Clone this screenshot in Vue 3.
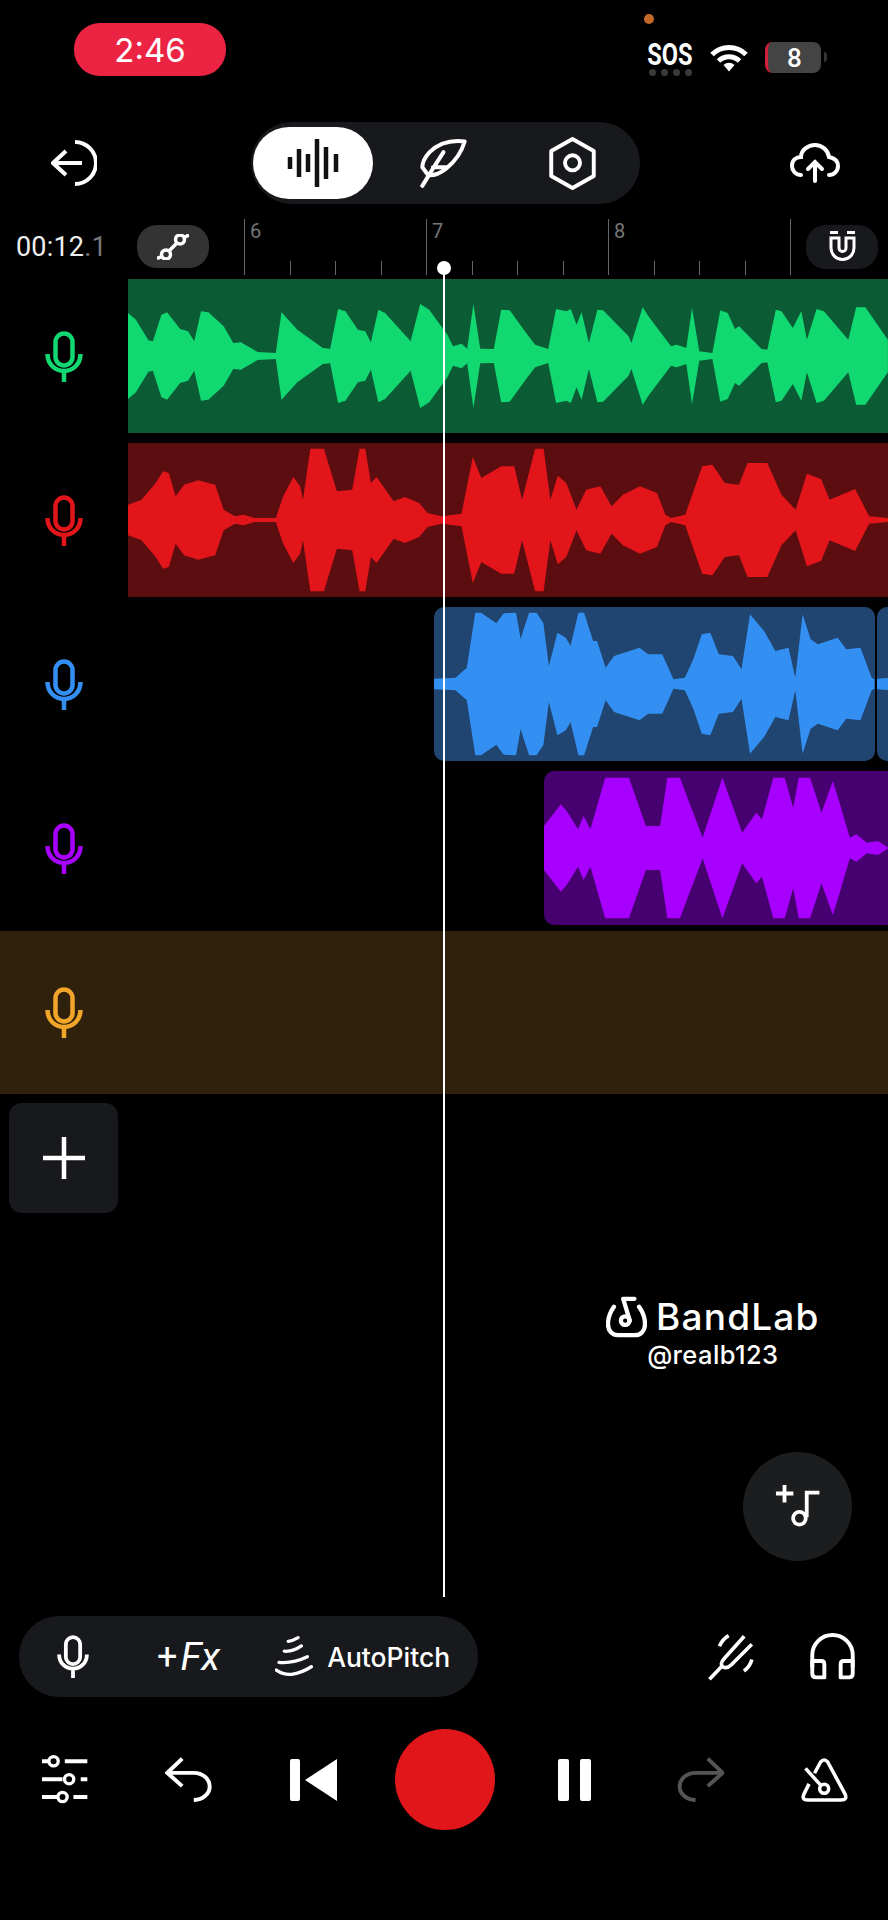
<template>
  <div class="app">
    <!-- status bar -->
    <div class="status">
      <div class="timer">2:46</div>
      <div class="status-right">
        <span class="rec-dot"></span>
        <div class="sos">
          <span class="sos-text">SOS</span>
          <div class="sos-dots"><i v-for="n in 4" :key="n"></i></div>
        </div>
        <svg class="wifi" width="38" height="28" viewBox="0 0 38 28" fill="none" stroke="#fff" stroke-width="5">
          <path d="M2 10.500 A 24 24 0 0 1 36 10.500" />
          <path d="M8.500 17 A 15 15 0 0 1 29.500 17" />
          <path d="M13.500 21 A 8 8 0 0 1 24.500 21 L19 27.500 Z" fill="#fff" stroke="none" />
        </svg>
        <div class="battery"><span>8</span></div>
        <span class="battery-nub"></span>
      </div>
    </div>

    <!-- toolbar -->
    <div class="toolbar">
      <svg width="46" height="46" viewBox="0 0 46 46" fill="none" stroke="#fff" stroke-width="4">
        <path d="M24 2 A 21 21 0 0 1 24 44" />
        <path d="M2 23 H31 M15 11 L2 23 L15 35" />
      </svg>
      <div class="modes">
        <div class="mode mode-active">
          <svg width="52" height="48" viewBox="0 0 52 48" fill="none" stroke="#111" stroke-width="4.500">
            <path d="M3 18 V30 M12 10 V38 M21 15 V33 M30 0 V48 M39 8 V40 M49 15 V33" />
          </svg>
        </div>
        <div class="mode">
          <svg width="48" height="50" viewBox="30 20 145 150" fill="none" stroke="#fff" stroke-width="12" stroke-linecap="round" stroke-linejoin="round">
            <path d="M168 30 Q104 22 62 62 Q40 86 40 108 L58 132 Q84 134 112 112 Q154 78 168 30 Z" />
            <path d="M40 164 L72 112 L104 62 M72 108 H112" />
          </svg>
        </div>
        <div class="mode">
          <svg width="47" height="53" viewBox="424 19 142 162" fill="none" stroke="#fff" stroke-width="12" stroke-linejoin="round">
            <path d="M495 25 L560 62 V138 L495 175 L430 138 V62 Z" />
            <circle cx="495" cy="98" r="23" />
          </svg>
        </div>
      </div>
      <svg class="upload" width="50" height="40" viewBox="0 0 50 40" fill="none" stroke="#fff" stroke-width="4" stroke-linecap="round">
        <path d="M11 32 C 5 32 2 27 2 23 C 2 17 6 14 11 14 C 11 7 18 2 25 2 C 32 2 38 7 39 14 C 44 15 48 18 48 23 C 48 28 44 32 39 32" />
        <path d="M25 38 V19 M18 26 L25 19 L32 26" />
      </svg>
    </div>

    <!-- ruler -->
    <div class="ruler-row">
      <div class="ruler-left">
        <div class="time">00:12<span>.1</span></div>
        <div class="curve-btn">
          <svg width="32" height="26" viewBox="0 0 32 26" fill="none" stroke="#fff" stroke-width="3.500">
            <circle cx="9" cy="20.500" r="4.500" />
            <circle cx="23" cy="5.500" r="4.500" />
            <path d="M0 24.500 L5 22.500 M12 17 L20 9 M27 3.500 L32 1" />
          </svg>
        </div>
      </div>
      <div class="ticks">
        <div v-for="t in ticks" :key="t.i" class="tick" :class="{ major: t.label }">
          <span v-if="t.label" class="tick-label">{{ t.label }}</span>
        </div>
        <div class="tick major end"></div>
      </div>
      <div class="magnet-btn">
        <svg width="29" height="31" viewBox="0 0 29 31" fill="none" stroke="#fff" stroke-width="3">
          <path d="M2 1.500 H10 M19 1.500 H27" />
          <path d="M3 7 V17 a11.500 11.500 0 0 0 23 0 V7 H18 V17 a3.500 3.500 0 0 1 -7 0 V7 Z" />
        </svg>
      </div>
    </div>

    <!-- tracks -->
    <div class="tracks">
      <div v-for="t in tracks" :key="t.name" class="track" :class="{ selected: t.selected }">
        <div class="track-head">
          <svg width="38" height="51" viewBox="0 0 38 51" fill="none" :stroke="t.color" stroke-width="4.500">
            <rect x="10.500" y="2.500" width="17" height="32" rx="8.500" />
            <path d="M2.500 23 C 2.500 33 10 40 19 40 S 35.500 33 35.500 23 M19 40 V51" />
          </svg>
        </div>
        <div class="lane">
          <div
            v-for="c in t.clips"
            :key="c.left"
            class="clip"
            :class="{ rounded: t.rounded }"
            :style="{ marginLeft: c.left + 'px', width: c.width + 'px', background: t.bg }"
          >
            <svg :width="c.width" height="154" :viewBox="`0 0 ${c.width} 154`">
              <polygon :points="c.points" :fill="t.color" />
            </svg>
          </div>
        </div>
      </div>
    </div>

    <div class="add-btn">
      <svg width="42" height="42" viewBox="0 0 42 42" stroke="#fff" stroke-width="4.500">
        <path d="M0 21 H42 M21 0 V42" />
      </svg>
    </div>

    <div class="watermark">
      <div class="brand">
        <svg width="41" height="42" viewBox="76 76 124 126" fill="none" stroke="#fff" stroke-width="13" stroke-linecap="round" stroke-linejoin="round">
          <path d="M100 108 C 88 125 82 142 82 160 C 82 182 96 194 112 194 H164 C 182 194 194 180 194 160 C 194 142 186 122 176 108" />
          <path d="M162 84 H128 L148 150" />
          <circle cx="134" cy="150" r="13" />
        </svg>
        <span class="brand-name">BandLab</span>
      </div>
      <div class="handle">@realb123</div>
    </div>

    <div class="fab">
      <svg width="46" height="46" viewBox="580 640 145 145" fill="none" stroke="#fff" stroke-width="12">
        <path d="M583 670 H638 M610 643 V698" />
        <path d="M680 745 V667 H720" />
        <circle cx="657" cy="748" r="20" />
      </svg>
    </div>

    <!-- bottom controls -->
    <div class="bottom">
      <div class="tools-row">
        <div class="tools-pill">
          <svg width="32" height="43" viewBox="0 0 38 51" fill="none" stroke="#fff" stroke-width="4.500">
            <rect x="10.500" y="2.500" width="17" height="32" rx="8.500" />
            <path d="M2.500 23 C 2.500 33 10 40 19 40 S 35.500 33 35.500 23 M19 40 V51" />
          </svg>
          <div class="fx"><span class="fx-plus">+</span><em>Fx</em></div>
          <div class="autopitch">
            <svg width="38" height="43" viewBox="50 30 115 128" fill="none" stroke="#fff" stroke-width="10" stroke-linecap="round">
              <path d="M90 48 Q105 46 120 37" />
              <path d="M78 78 Q104 80 130 62" />
              <path d="M62 112 Q104 116 148 95" />
              <path d="M54 135 Q76 150 100 148 Q130 144 160 125" />
            </svg>
            <span>AutoPitch</span>
          </div>
        </div>
        <div class="tools-right">
          <svg width="50" height="48" viewBox="50 40 150 145" fill="none" stroke="#fff" stroke-width="11" stroke-linecap="butt">
            <path d="M60 180 L96 142" />
            <path d="M165 50 L104 118 Q90 134 100 142 Q112 150 126 136 L188 74" />
            <path d="M118 48 Q100 58 90 80 M188 120 Q182 142 164 155" />
          </svg>
          <svg width="47" height="49" viewBox="358 34 144 148" fill="none" stroke="#fff" stroke-width="12" stroke-linejoin="round">
            <path d="M368 140 V104 A62 62 0 0 1 492 104 V140" />
            <path d="M368 122 H396 Q405 122 405 132 V172 H380 Q368 172 368 160 Z" />
            <path d="M492 122 H464 Q455 122 455 132 V172 H480 Q492 172 492 160 Z" />
          </svg>
        </div>
      </div>

      <div class="transport">
        <svg width="47" height="51" viewBox="30 28 142 154" fill="none" stroke="#fff" stroke-width="12">
          <path d="M33 50 H55 M102 50 H170 M33 104 H95 M150 104 H170 M33 158 H80 M128 158 H170" />
          <circle cx="68" cy="50" r="14" stroke-width="10" />
          <circle cx="115" cy="104" r="14" stroke-width="10" />
          <circle cx="95" cy="158" r="14" stroke-width="10" />
        </svg>
        <svg width="47" height="45" viewBox="403 38 142 134" fill="none" stroke="#fff" stroke-width="12">
          <path d="M455 42 L410 85 L455 125" />
          <path d="M410 85 H490 A 48 41 0 0 1 490 167" />
        </svg>
        <svg width="47" height="42" viewBox="0 0 47 42" fill="#fff">
          <rect x="0" y="0" width="10" height="42" rx="2" />
          <path d="M15 21 L47 0 V42 Z" />
        </svg>
        <div class="record"></div>
        <svg width="33" height="42" viewBox="0 0 33 42" fill="#fff">
          <rect x="0" y="0" width="11" height="42" rx="2" />
          <rect x="22" y="0" width="11" height="42" rx="2" />
        </svg>
        <svg width="47" height="45" viewBox="19 38 142 134" fill="none" stroke="#555" stroke-width="12">
          <path d="M112 42 L157 85 L112 125" />
          <path d="M157 85 H75 A 48 41 0 0 0 75 167" />
        </svg>
        <svg width="47" height="46" viewBox="391 36 146 140" fill="none" stroke="#fff" stroke-width="11" stroke-linejoin="round">
          <path d="M433 85 L452 50 Q463 38 474 50 L528 150 Q536 168 515 168 H412 Q392 168 400 150 L416 118" />
          <path d="M405 70 L452 122" />
          <circle cx="463" cy="133" r="14" />
        </svg>
      </div>
    </div>

    <!-- playhead sits over everything -->
    <div class="playhead"><span></span></div>
  </div>
</template>

<script setup>
// peaks are [x, top] read off the reference crops: x in 1.766x, y in 3x
const SX = 1.766

const greenPeaks = [
  [226, 130], [240, 150], [262, 212], [270, 215], [285, 135], [295, 128], [318, 178], [332, 185], [343, 215],
  [355, 125], [368, 128], [395, 170], [412, 220], [425, 218], [455, 247], [487, 250], [497, 128], [525, 180],
  [570, 235], [583, 237], [597, 118], [610, 125], [632, 180], [645, 185], [655, 218], [668, 120], [680, 130],
  [725, 215], [742, 103], [758, 120], [790, 195], [800, 230], [815, 222], [825, 237], [836, 103], [848, 237],
  [872, 238], [885, 120], [900, 122], [925, 180], [945, 225], [968, 238], [982, 118], [1000, 125], [1008, 118],
  [1018, 165], [1027, 128], [1040, 220], [1055, 120], [1065, 122], [1110, 200], [1115, 220], [1135, 113],
  [1145, 140], [1185, 230], [1195, 225], [1212, 235], [1222, 115], [1235, 245], [1258, 250], [1272, 122],
  [1285, 130], [1298, 178], [1305, 170], [1345, 238], [1355, 240], [1370, 120], [1380, 125], [1400, 175],
  [1415, 125], [1425, 210], [1442, 118], [1455, 125], [1498, 210], [1512, 113], [1528, 113], [1568, 210],
]

const redPeaks = [
  [226, 705], [250, 690], [275, 640], [288, 605], [298, 610], [310, 680], [325, 645], [350, 632], [380, 645],
  [395, 720], [415, 740], [430, 735], [450, 745], [487, 745], [500, 680], [518, 622], [530, 650], [535, 690],
  [548, 537], [572, 537], [595, 665], [622, 660], [635, 537], [645, 537], [655, 640], [665, 622], [695, 695],
  [715, 682], [740, 700], [755, 730], [780, 740], [815, 732], [835, 562], [850, 625], [885, 590], [908, 590],
  [922, 690], [945, 537], [960, 537], [972, 690], [985, 618], [1000, 640], [1018, 720], [1035, 660], [1060, 650],
  [1080, 710], [1100, 675], [1130, 650], [1160, 670], [1175, 735], [1185, 745], [1210, 735], [1240, 590],
  [1258, 585], [1280, 640], [1305, 645], [1320, 580], [1355, 580], [1380, 675], [1405, 720], [1425, 612],
  [1450, 628], [1465, 690], [1510, 658], [1535, 740], [1568, 745],
]

const bluePeaks = [
  [767, 238], [805, 235], [825, 205], [840, 40], [850, 40], [877, 72], [890, 42], [912, 40], [920, 118], [935, 40],
  [948, 40], [960, 70], [970, 200], [985, 100], [1000, 115], [1008, 140], [1022, 40], [1032, 40], [1048, 125],
  [1055, 125], [1070, 205], [1085, 170], [1130, 145], [1145, 165], [1170, 165], [1190, 240], [1210, 235],
  [1225, 180], [1240, 105], [1255, 100], [1270, 165], [1295, 170], [1310, 210], [1325, 45], [1350, 95],
  [1370, 155], [1393, 145], [1405, 235], [1418, 45], [1432, 120], [1445, 135], [1480, 115], [1495, 150],
  [1520, 145], [1540, 235], [1545, 240],
]

const blueTail = [[1548, 238], [1568, 236]]

const purplePeaks = [
  [960, 680], [990, 615], [1002, 640], [1020, 690], [1030, 650], [1042, 690], [1068, 535], [1110, 535], [1140, 680],
  [1165, 680], [1178, 535], [1200, 535], [1240, 715], [1275, 535], [1310, 700], [1335, 640], [1345, 660], [1365, 535],
  [1385, 535], [1400, 625], [1410, 535], [1430, 535], [1450, 640], [1470, 545], [1480, 600], [1500, 715], [1512, 705],
  [1530, 730], [1550, 725], [1568, 745],
]

const wavePoints = (peaks, center) => {
  const x0 = peaks[0][0]
  const top = peaks.map(([x, y]) => [(x - x0) / SX, 77 - (center - y) / 3])
  const bottom = top.map(([x, y]) => [x, 154 - y]).reverse()
  return [...top, ...bottom].map(([x, y]) => `${x.toFixed(1)},${y.toFixed(1)}`).join(" ")
}

const tracks = [
  {
    name: "green",
    color: "#12d871",
    bg: "#0b5c35",
    clips: [{ left: 0, width: 760, points: wavePoints(greenPeaks, 259) }],
  },
  {
    name: "red",
    color: "#e1151a",
    bg: "#5c0d10",
    clips: [{ left: 0, width: 760, points: wavePoints(redPeaks, 751) }],
  },
  {
    name: "blue",
    color: "#3390f2",
    bg: "#1f4570",
    rounded: true,
    clips: [
      { left: 306, width: 441, points: wavePoints(bluePeaks, 254) },
      { left: 2, width: 30, points: wavePoints(blueTail, 254) },
    ],
  },
  {
    name: "purple",
    color: "#a700ff",
    bg: "#47006f",
    rounded: true,
    clips: [{ left: 416, width: 360, points: wavePoints(purplePeaks, 746) }],
  },
  {
    name: "yellow",
    color: "#f2a52b",
    bg: "transparent",
    selected: true,
    clips: [],
  },
]

const ticks = Array.from({ length: 12 }, (_, i) => ({
  i,
  label: i % 4 === 0 ? 6 + i / 4 : null,
}))
</script>

<style scoped>
.app {
  position: relative;
  display: flex;
  flex-direction: column;
  width: 888px;
  height: 1920px;
  overflow: hidden;
  background: #000;
  color: #fff;
  font-family: Roboto, "Liberation Sans", sans-serif;
}

/* status bar */
.status {
  display: flex;
  justify-content: space-between;
  height: 122px;
  box-sizing: border-box;
  padding: 23px 61px 0 74px;
}

.timer {
  display: flex;
  align-items: center;
  justify-content: center;
  width: 152px;
  height: 53px;
  border-radius: 26px;
  background: #ec2443;
  font-family: Inter, sans-serif;
  font-size: 33px;
}

.status-right {
  position: relative;
  display: flex;
  align-items: flex-start;
  padding-top: 19px;
}

.rec-dot {
  position: absolute;
  top: -9px;
  left: -3px;
  width: 10px;
  height: 10px;
  border-radius: 50%;
  background: #c4682a;
}

.sos {
  display: flex;
  flex-direction: column;
  align-items: center;
  width: 46px;
}

.sos-text {
  font-size: 31px;
  font-weight: 700;
  line-height: 25px;
  transform: scaleX(0.76);
}

.sos-dots {
  display: flex;
  gap: 5px;
  margin-top: 2px;
}

.sos-dots i {
  width: 7px;
  height: 7px;
  border-radius: 50%;
  background: #3a3a3a;
}

.wifi {
  margin: 2px 0 0 17px;
}

.battery {
  display: flex;
  align-items: center;
  justify-content: center;
  width: 56px;
  height: 31px;
  margin-left: 17px;
  box-sizing: border-box;
  border-left: 3px solid #d3203a;
  border-radius: 8px;
  background: #444;
  font-size: 26px;
  font-weight: 500;
}

.battery-nub {
  width: 3px;
  height: 10px;
  margin: 10px 0 0 3px;
  border-radius: 0 3px 3px 0;
  background: #333;
}

/* toolbar */
.toolbar {
  display: flex;
  align-items: center;
  height: 82px;
  padding: 0 48px 0 51px;
  margin-bottom: 15px;
}

.modes {
  display: flex;
  align-items: center;
  width: 389px;
  height: 82px;
  margin-left: 154px;
  box-sizing: border-box;
  padding: 0 2px;
  border-radius: 41px;
  background: #18191c;
}

.mode {
  display: flex;
  align-items: center;
  justify-content: center;
  width: 131px;
  height: 72px;
}

.mode-active {
  width: 121px;
  margin-right: 4px;
  border-radius: 36px;
  background: #fff;
}

.upload {
  margin-left: auto;
}

/* ruler */
.ruler-row {
  display: flex;
  align-items: center;
  height: 55px;
}

.ruler-left {
  display: flex;
  align-items: center;
  width: 244px;
  padding-left: 16px;
  box-sizing: border-box;
}

.time {
  width: 121px;
  font-size: 27px;
  letter-spacing: 0.2px;
  color: #eee;
}

.time span {
  color: #777;
}

.curve-btn {
  display: flex;
  align-items: center;
  justify-content: center;
  width: 72px;
  height: 43px;
  border-radius: 20px;
  background: #333;
}

.ticks {
  display: flex;
  align-items: flex-end;
  height: 56px;
  align-self: flex-start;
}

.tick {
  position: relative;
  width: 45.5px;
  height: 14px;
  box-sizing: border-box;
  border-left: 1px solid #666;
}

.tick.major {
  height: 56px;
}

.tick.end {
  width: 1px;
}

.tick-label {
  position: absolute;
  top: 2px;
  left: 5px;
  color: #777;
  font-size: 20px;
  line-height: 20px;
}

.magnet-btn {
  display: flex;
  align-items: center;
  justify-content: center;
  width: 72px;
  height: 44px;
  margin-left: 15px;
  border-radius: 20px;
  background: #18191c;
}

/* tracks */
.track {
  display: flex;
  height: 164px;
}

.track.selected {
  height: 163px;
  margin-top: 1px;
  background: #2f210b;
}

.track-head {
  display: flex;
  align-items: center;
  justify-content: center;
  flex: 0 0 128px;
}

.lane {
  display: flex;
  flex: 1;
  align-items: center;
  overflow: hidden;
}

.clip {
  flex-shrink: 0;
  height: 154px;
  overflow: hidden;
}

.clip svg {
  display: block;
}

.clip.rounded {
  border-radius: 10px;
}

.add-btn {
  display: flex;
  align-items: center;
  justify-content: center;
  width: 109px;
  height: 110px;
  margin: 9px 0 0 9px;
  border-radius: 13px;
  background: #18191d;
}

/* floating bits */
.watermark {
  position: absolute;
  top: 1296px;
  left: 606px;
  display: flex;
  flex-direction: column;
  align-items: center;
}

.brand {
  display: flex;
  align-items: center;
  gap: 9px;
}

.brand-name {
  font-family: Inter, sans-serif;
  font-size: 37px;
  font-weight: 500;
  line-height: 42px;
  letter-spacing: 1.2px;
}

.handle {
  margin-top: 3px;
  font-family: Inter, sans-serif;
  font-size: 25.500px;
  font-weight: 500;
  line-height: 28px;
  letter-spacing: 0.4px;
}

.fab {
  position: absolute;
  top: 1452px;
  left: 743px;
  display: flex;
  align-items: center;
  justify-content: center;
  width: 109px;
  height: 109px;
  border-radius: 50%;
  background: #1c1d1f;
}

/* bottom controls */
.bottom {
  margin-top: auto;
  padding-bottom: 90px;
}

.tools-row {
  display: flex;
  align-items: center;
  justify-content: space-between;
  padding: 0 32px 0 19px;
}

.tools-pill {
  display: flex;
  align-items: center;
  width: 459px;
  height: 81px;
  box-sizing: border-box;
  padding-left: 38px;
  border-radius: 40px;
  background: #18191c;
}

.fx {
  display: flex;
  align-items: center;
  margin-left: 68px;
  font-size: 39px;
  line-height: 40px;
}

.fx-plus {
  margin-right: 3px;
  font-size: 36px;
}

.fx em {
  font-weight: 400;
}

.autopitch {
  display: flex;
  align-items: center;
  gap: 14px;
  margin-left: 55px;
  font-family: Inter, sans-serif;
  font-size: 26.500px;
  font-weight: 500;
}

.tools-right {
  display: flex;
  align-items: center;
  gap: 53px;
}

.transport {
  display: grid;
  grid-template-columns: 124px 123px 128px 134px 126px 126px 122px;
  align-items: center;
  justify-items: center;
  height: 101px;
  margin-top: 32px;
  padding-left: 2.5px;
}

.record {
  width: 100px;
  height: 101px;
  border-radius: 50%;
  background: #e0161b;
}

.playhead {
  position: absolute;
  top: 268px;
  left: 443px;
  width: 2px;
  height: 1329px;
  background: #fff;
}

.playhead span {
  position: absolute;
  top: -7px;
  left: -6px;
  width: 14px;
  height: 14px;
  border-radius: 50%;
  background: #fff;
}
</style>

<style>
html,
body {
  background: #000;
}
</style>
